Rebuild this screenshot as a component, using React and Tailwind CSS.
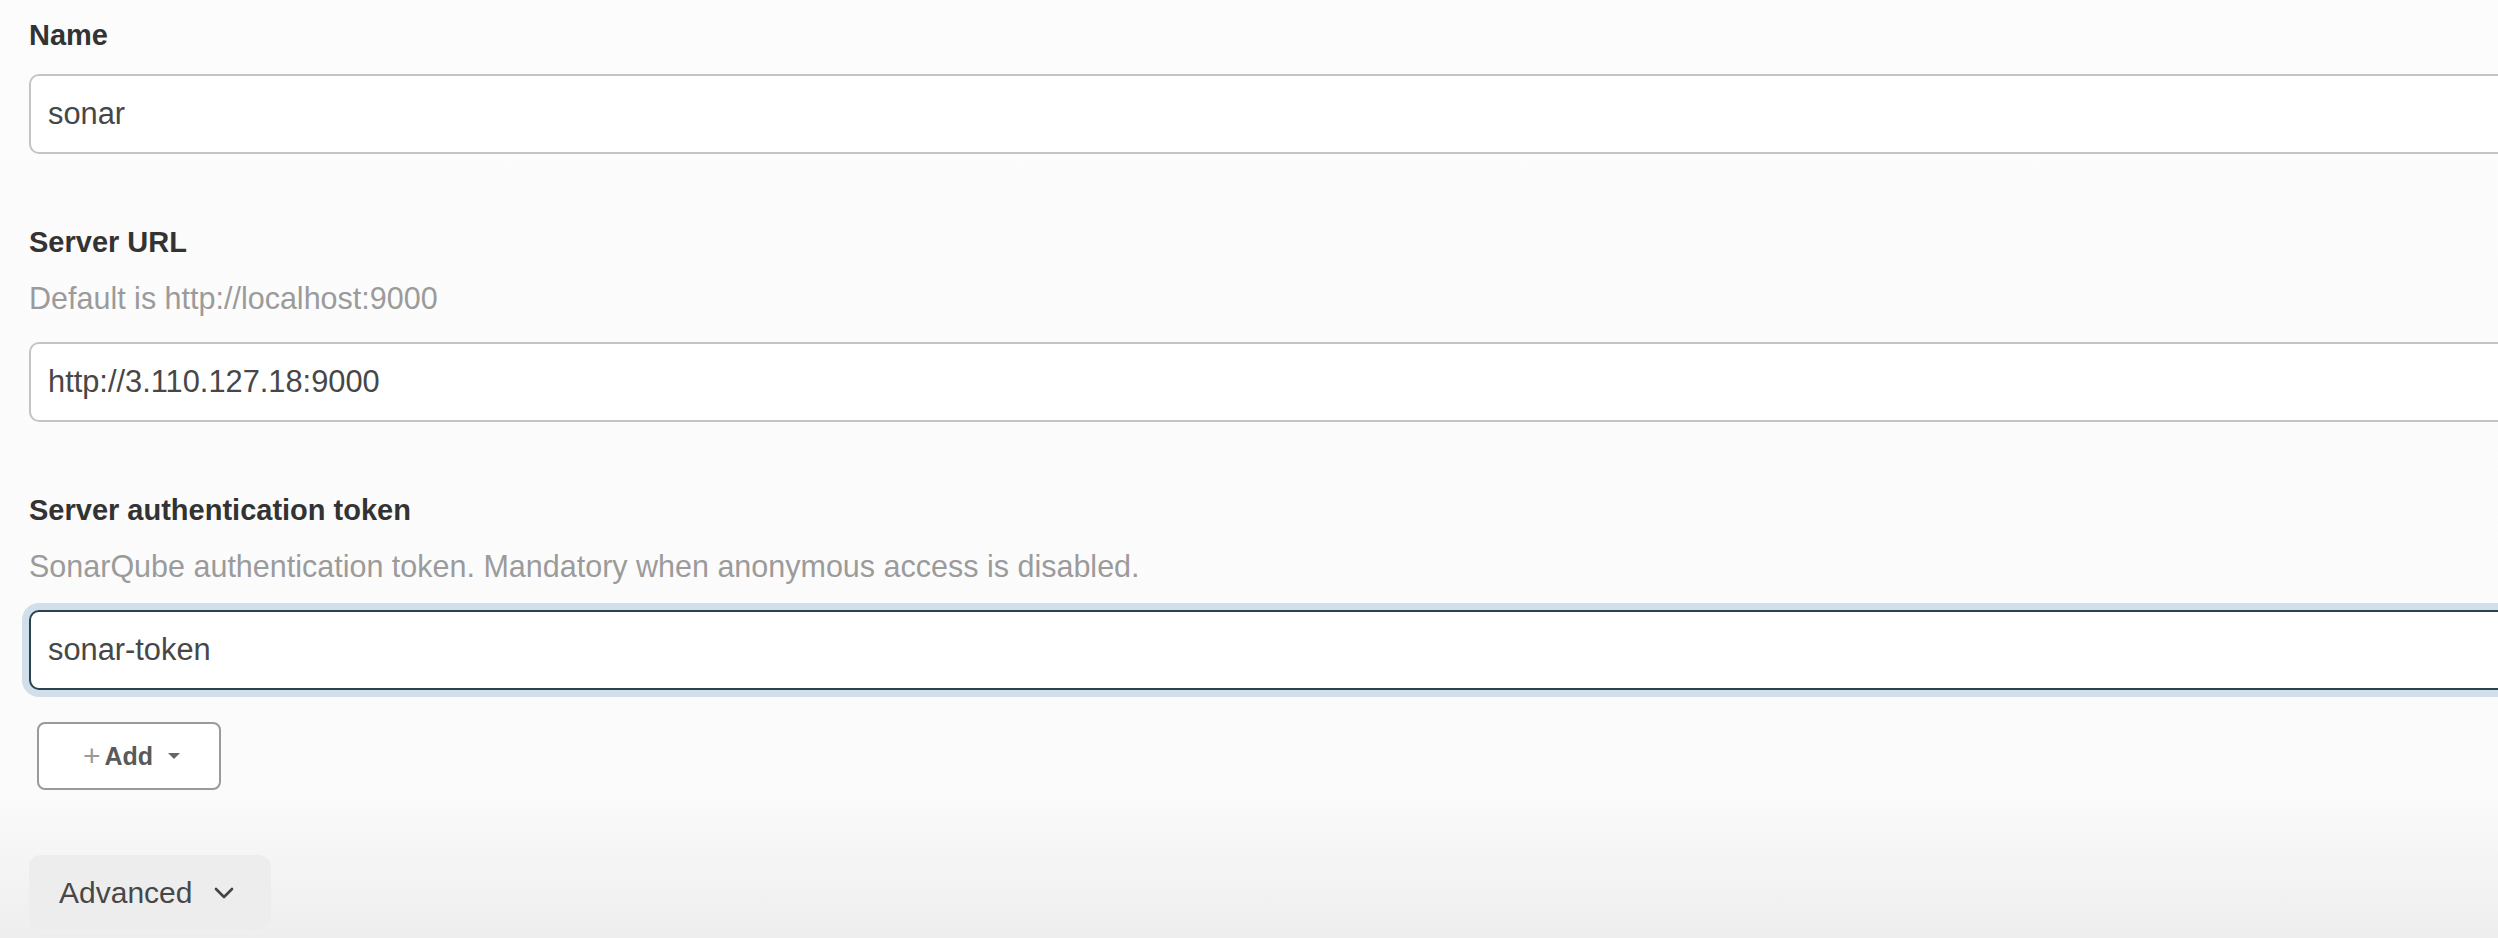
import React from 'react';

const font = { fontFamily: '"Liberation Sans", Arial, sans-serif' };

const Field = ({ label, description, value, focused, first }) => (
    <div className={first ? 'pt-[17px]' : 'pt-[70px]'}>
        <div className="text-[29px] leading-[36px] font-bold text-[#333333]">{label}</div>
        {description && (
            <div className="mt-[20px] text-[30.5px] leading-[36px] text-[#9b9b9b]">{description}</div>
        )}
        <div
            className={
                (description ? 'mt-[26px] ' : 'mt-[21px] ') +
                'w-[2520px] h-[80px] rounded-[10px] bg-white flex items-center pl-[17px] text-[30.8px] text-[#474747] ' +
                (focused
                    ? 'border-[2.5px] border-[#2d4250] shadow-[0_0_0_7px_#d0dfe9]'
                    : 'border-2 border-[#c4c4c4]')
            }
        >
            {value}
        </div>
    </div>
);

const App = () => {
    return (
        <div
            className="min-h-[938px] w-full overflow-hidden pl-[29px] bg-[linear-gradient(to_bottom,#fcfcfc_0%,#fbfbfb_84%,#eeeeee_100%)]"
            style={font}
        >
            <Field first label="Name" value="sonar" />
            <Field label="Server URL" description="Default is http://localhost:9000" value="http://3.110.127.18:9000" />
            <Field
                label="Server authentication token"
                description="SonarQube authentication token. Mandatory when anonymous access is disabled."
                value="sonar-token"
                focused
            />

            {/* credentials add dropdown */}
            <div className="mt-[32px] ml-[8px]">
                <button className="h-[68px] w-[184px] rounded-[8px] border-2 border-[#9a9a9a] bg-white flex items-center pl-[44px]">
                    <span className="text-[30px] font-light text-[#9a9a9a] leading-none">+</span>
                    <span className="ml-[4px] text-[25px] font-bold text-[#5a5a5a] leading-none">Add</span>
                    <svg className="ml-[14px]" width="14" height="8" viewBox="0 0 14 8">
                        <path d="M1 1h12L7 7z" fill="#666666" />
                    </svg>
                </button>
            </div>

            <div className="mt-[65px]">
                <button className="h-[75px] w-[242px] rounded-[12px] bg-[#ededed] flex items-center pl-[30px] text-[30px] text-[#474747]">
                    Advanced
                    <svg className="ml-[22px]" width="20" height="12" viewBox="0 0 20 12">
                        <path d="M2 2l8 8 8-8" fill="none" stroke="#444444" strokeWidth="2.6" strokeLinecap="round" strokeLinejoin="round" />
                    </svg>
                </button>
            </div>
        </div>
    );
};

export default App;
